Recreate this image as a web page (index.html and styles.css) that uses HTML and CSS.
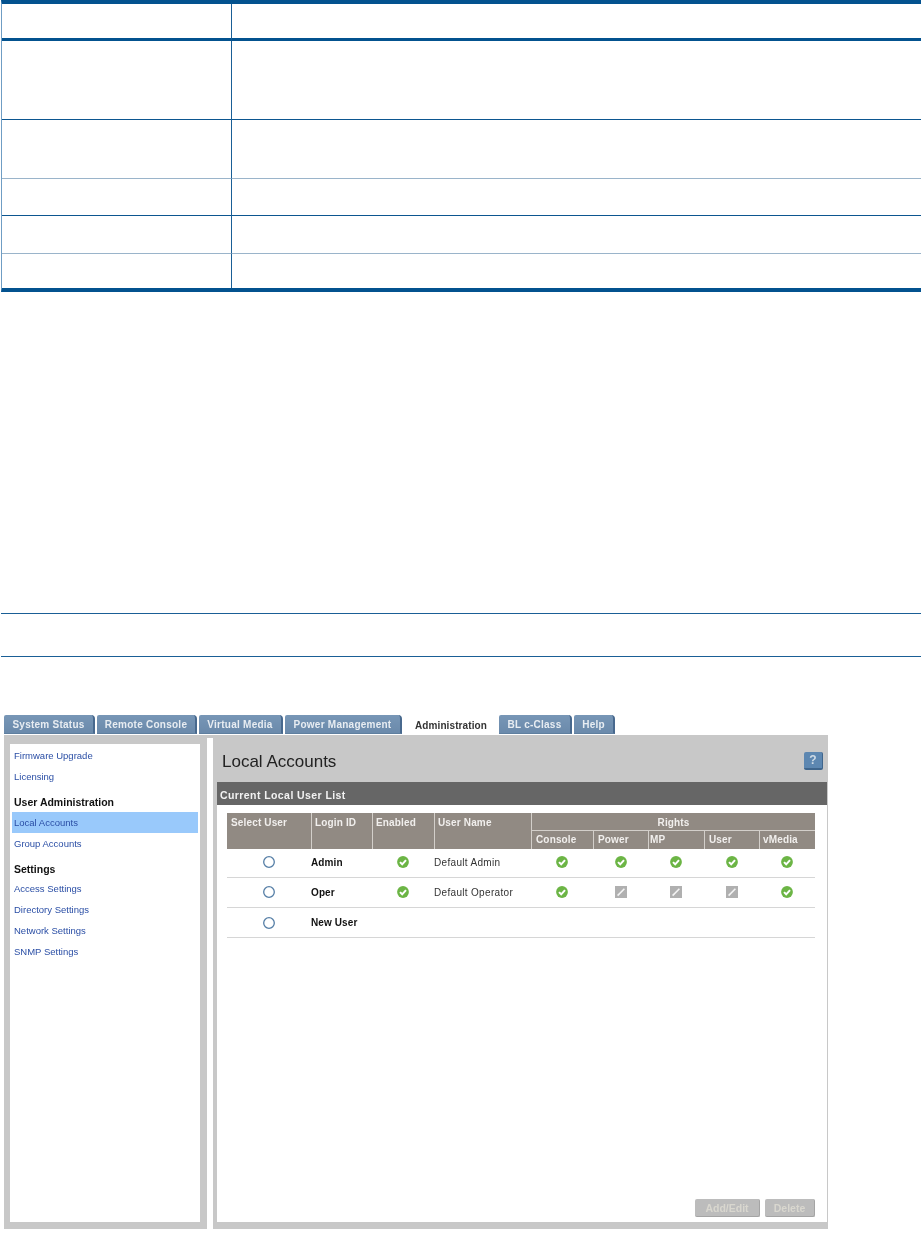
FILE: index.html
```html
<!DOCTYPE html>
<html lang="en">
<head>
<meta charset="utf-8">
<title>Local Accounts</title>
<link rel="stylesheet" href="styles.css">
</head>
<body>
<svg class="defs" width="0" height="0" aria-hidden="true">
  <symbol id="ok" viewBox="0 0 12 12">
    <circle cx="6" cy="6" r="5.9" fill="#6cb545"/>
    <path d="M3 6.1 5.2 8.3 9 4.1" fill="none" stroke="#fff" stroke-width="2"/>
  </symbol>
  <symbol id="off" viewBox="0 0 12 12">
    <rect width="12" height="12" fill="#b0b0b0"/>
    <path d="M2.6 9.6 9.4 2.8" fill="none" stroke="#f4f4f4" stroke-width="1.6"/>
  </symbol>
  <symbol id="radio" viewBox="0 0 12 12">
    <circle cx="6" cy="6" r="5.3" fill="#fff" stroke="#557ea6" stroke-width="1.3"/>
  </symbol>
</svg>

<table class="doc-table">
  <tr class="row-head"><td class="doc-key"></td><td></td></tr>
  <tr class="row-tall"><td class="doc-key"></td><td></td></tr>
  <tr class="row-mid soft"><td class="doc-key"></td><td></td></tr>
  <tr class="row-low"><td class="doc-key"></td><td></td></tr>
  <tr class="row-lower soft"><td class="doc-key"></td><td></td></tr>
  <tr class="row-last"><td class="doc-key"></td><td></td></tr>
</table>

<div class="note"></div>

<section class="shot">
  <nav class="tabs">
    <a class="tab tab-1">System Status</a>
    <a class="tab tab-2">Remote Console</a>
    <a class="tab tab-3">Virtual Media</a>
    <a class="tab tab-4">Power Management</a>
    <a class="tab tab-5 active">Administration</a>
    <a class="tab tab-6">BL c-Class</a>
    <a class="tab tab-7">Help</a>
  </nav>
  <div class="panel">
    <aside class="side">
      <div class="side-inner">
        <a class="link">Firmware Upgrade</a>
        <a class="link">Licensing</a>
        <h3 class="side-head">User Administration</h3>
        <a class="link current">Local Accounts</a>
        <a class="link">Group Accounts</a>
        <h3 class="side-head side-head-short">Settings</h3>
        <a class="link">Access Settings</a>
        <a class="link">Directory Settings</a>
        <a class="link">Network Settings</a>
        <a class="link">SNMP Settings</a>
      </div>
    </aside>
    <main class="main">
      <header class="title-row">
        <h1 class="title">Local Accounts</h1>
        <span class="help">?</span>
      </header>
      <h2 class="bar">Current Local User List</h2>
      <div class="content">
        <table class="users">
          <colgroup>
            <col class="c-select"><col class="c-login"><col class="c-enabled"><col class="c-name">
            <col class="c-console"><col class="c-power"><col class="c-mp"><col class="c-user"><col class="c-vmedia">
          </colgroup>
          <thead>
            <tr class="th-top">
              <th rowspan="2">Select User</th>
              <th rowspan="2">Login ID</th>
              <th rowspan="2">Enabled</th>
              <th rowspan="2">User Name</th>
              <th colspan="5" class="rights">Rights</th>
            </tr>
            <tr class="th-sub">
              <th>Console</th><th>Power</th><th class="tight">MP</th><th>User</th><th class="tight-v">vMedia</th>
            </tr>
          </thead>
          <tbody>
            <tr class="row-first">
              <td class="mid"><svg class="ico"><use href="#radio"/></svg></td>
              <td class="login">Admin</td>
              <td class="mid"><svg class="ico"><use href="#ok"/></svg></td>
              <td class="uname">Default Admin</td>
              <td class="mid"><svg class="ico"><use href="#ok"/></svg></td>
              <td class="mid"><svg class="ico"><use href="#ok"/></svg></td>
              <td class="mid"><svg class="ico"><use href="#ok"/></svg></td>
              <td class="mid"><svg class="ico"><use href="#ok"/></svg></td>
              <td class="mid"><svg class="ico"><use href="#ok"/></svg></td>
            </tr>
            <tr class="row-second">
              <td class="mid"><svg class="ico"><use href="#radio"/></svg></td>
              <td class="login">Oper</td>
              <td class="mid"><svg class="ico"><use href="#ok"/></svg></td>
              <td class="uname">Default Operator</td>
              <td class="mid"><svg class="ico"><use href="#ok"/></svg></td>
              <td class="mid"><svg class="ico"><use href="#off"/></svg></td>
              <td class="mid"><svg class="ico"><use href="#off"/></svg></td>
              <td class="mid"><svg class="ico"><use href="#off"/></svg></td>
              <td class="mid"><svg class="ico"><use href="#ok"/></svg></td>
            </tr>
            <tr>
              <td class="mid"><svg class="ico"><use href="#radio"/></svg></td>
              <td class="login">New User</td>
              <td></td><td></td><td></td><td></td><td></td><td></td><td></td>
            </tr>
          </tbody>
        </table>
        <div class="actions">
          <span class="btn btn-add">Add/Edit</span>
          <span class="btn btn-del">Delete</span>
        </div>
      </div>
    </main>
  </div>
</section>
</body>
</html>
```

FILE: styles.css
```css
* { box-sizing: border-box; }
html, body { margin: 0; padding: 0; background: #fff; }
body { font-family: "Liberation Sans", Arial, sans-serif; height: 1233px; overflow: hidden; }
.defs { position: absolute; }

/* Document table (its text is blank in the reference) */
.doc-table {
  width: 920px; margin-left: 1px;
  border-collapse: separate; border-spacing: 0;
  border-top: 4px solid #03528f;
  border-bottom: 4px solid #03528f;
  border-left: 1px solid #6f9dc4;
}
.doc-table td { padding: 0; border-bottom: 1px solid #0c5690; }
.doc-table .doc-key { width: 230px; border-right: 1px solid #1a5f96; }
.doc-table .soft td { border-bottom-color: #9ab4ca; }
.row-head td { height: 37px; border-bottom-width: 3px !important; border-bottom-color: #03528f !important; }
.row-tall td { height: 79px; }
.row-mid td { height: 59px; }
.row-low td { height: 37px; }
.row-lower td { height: 38px; }
.doc-table .row-last td { height: 34px; border-bottom: 0; }

.note {
  width: 920px; height: 44px; margin: 321px 0 0 1px;
  border-top: 1px solid #1a5f96;
  border-bottom: 1px solid #1a5f96;
}

/* Embedded screenshot */
.shot { width: 824px; margin: 58px 0 0 4px; filter: blur(0.45px); }
.tabs { display: flex; height: 20px; }
.tab {
  display: flex; align-items: center; justify-content: center;
  height: 19px; margin-right: 2px;
  font-size: 10px; font-weight: bold; color: #e8edf2;
  background: linear-gradient(#7796b6, #6b8aab);
  border-right: 2px solid #48698e;
  border-bottom: 1px solid #5f7f9f;
  border-top-right-radius: 4px;
  border-top-left-radius: 2px;
  letter-spacing: 0.25px;
  white-space: nowrap;
}
.tab-1 { width: 91px; }
.tab-2 { width: 100px; }
.tab-3 { width: 84px; }
.tab-4 { width: 117px; }
.tab-5 { width: 94px; margin-right: 1px; }
.tab-6 { width: 73px; }
.tab-7 { width: 41px; margin-right: 0; }
.tab.active {
  height: 20px; background: #fff; color: #333;
  border: 0; border-radius: 0; letter-spacing: 0.1px;
}

.panel {
  height: 494px; display: flex;
  background: linear-gradient(#c8c8c8 3px, #fff 3px);
}
.side, .main { background: #c8c8c8; }
.side { width: 203px; padding: 9px 7px 7px 6px; }
.side-inner { height: 100%; background: #fff; padding: 1px 2px; }
.link {
  display: flex; align-items: center; height: 21px; padding-left: 2px;
  font-size: 9.5px; color: #2a4ea5;
}
.current { background: #99c9fb; }
.side-head {
  margin: 0; height: 25px; padding: 5px 0 0 2px;
  display: flex; align-items: center;
  font-size: 10.5px; font-weight: bold; color: #111;
}
.side-head-short { height: 24px; }
.main {
  width: 615px; margin-left: 6px;
  display: flex; flex-direction: column;
  padding: 0 1px 7px 4px;
}
.title-row {
  height: 47px; display: flex; align-items: center; justify-content: space-between;
  padding: 6px 4px 0 5px;
}
.title { margin: 0; font-size: 17px; font-weight: normal; color: #222; }
.help {
  width: 19px; height: 18px; margin-top: -2px;
  display: flex; align-items: center; justify-content: center;
  background: #5d87b1; color: #cfdbe6;
  border-right: 1px solid #3f658c; border-bottom: 2px solid #3f658c; border-radius: 2px;
  font-size: 12px; font-weight: bold;
}
.bar {
  margin: 0; height: 23px; padding: 3px 0 0 3px;
  display: flex; align-items: center;
  background: #666; color: #f2f2f2;
  font-size: 10.5px; font-weight: bold; letter-spacing: 0.42px;
}
.content {
  flex: 1; background: #fff; padding: 8px 0 5px 10px;
  display: flex; flex-direction: column;
}
.users { width: 588px; table-layout: fixed; border-collapse: separate; border-spacing: 0; }
.c-select { width: 84px; }
.c-login { width: 61px; }
.c-enabled { width: 62px; }
.c-name { width: 97px; }
.c-console { width: 62px; }
.c-power { width: 55px; }
.c-mp { width: 56px; }
.c-user { width: 55px; }
.c-vmedia { width: 56px; }
.users th {
  padding: 4px 0 0 3px; background: #918a83; color: #f1efed;
  font-size: 10px; font-weight: bold; text-align: left; vertical-align: top;
  border-left: 1px solid #d3cfca; letter-spacing: 0.15px;
}
.users th:first-child { border-left: 0; padding-left: 4px; }
.users .th-top th { height: 17px; }
.users .th-sub th { height: 19px; border-top: 1px solid #d3cfca; padding-top: 3px; padding-left: 4px; }
.users .th-sub th:first-child { border-left: 1px solid #d3cfca; }
.users .rights { text-align: center; padding-left: 0; }
.users .th-sub .tight { padding-left: 1px; }
.users .th-sub .tight-v { padding-left: 3px; }
.users td {
  height: 30px; padding: 0; font-size: 10px; color: #333;
  border-bottom: 1px solid #d6d6d6; vertical-align: middle;
}
.users .row-first td { height: 29px; padding-bottom: 2px; }
.users .row-second td { padding-bottom: 1px; }
.users .mid { text-align: center; }
.users .login { font-weight: bold; color: #111; letter-spacing: 0.1px; }
.users .uname { letter-spacing: 0.32px; }
.ico { display: block; width: 12px; height: 12px; margin: 0 auto; }
.actions { margin-top: auto; display: flex; justify-content: flex-end; gap: 5px; padding-right: 12px; }
.btn {
  height: 18px; display: flex; align-items: center; justify-content: center;
  background: #bcbcbc; color: #d9d7cf;
  font-size: 10.5px; font-weight: bold; border-radius: 2px;
  border-right: 1px solid #a4a4a4; border-bottom: 1px solid #a4a4a4;
}
.btn-add { width: 65px; }
.btn-del { width: 50px; }
```
